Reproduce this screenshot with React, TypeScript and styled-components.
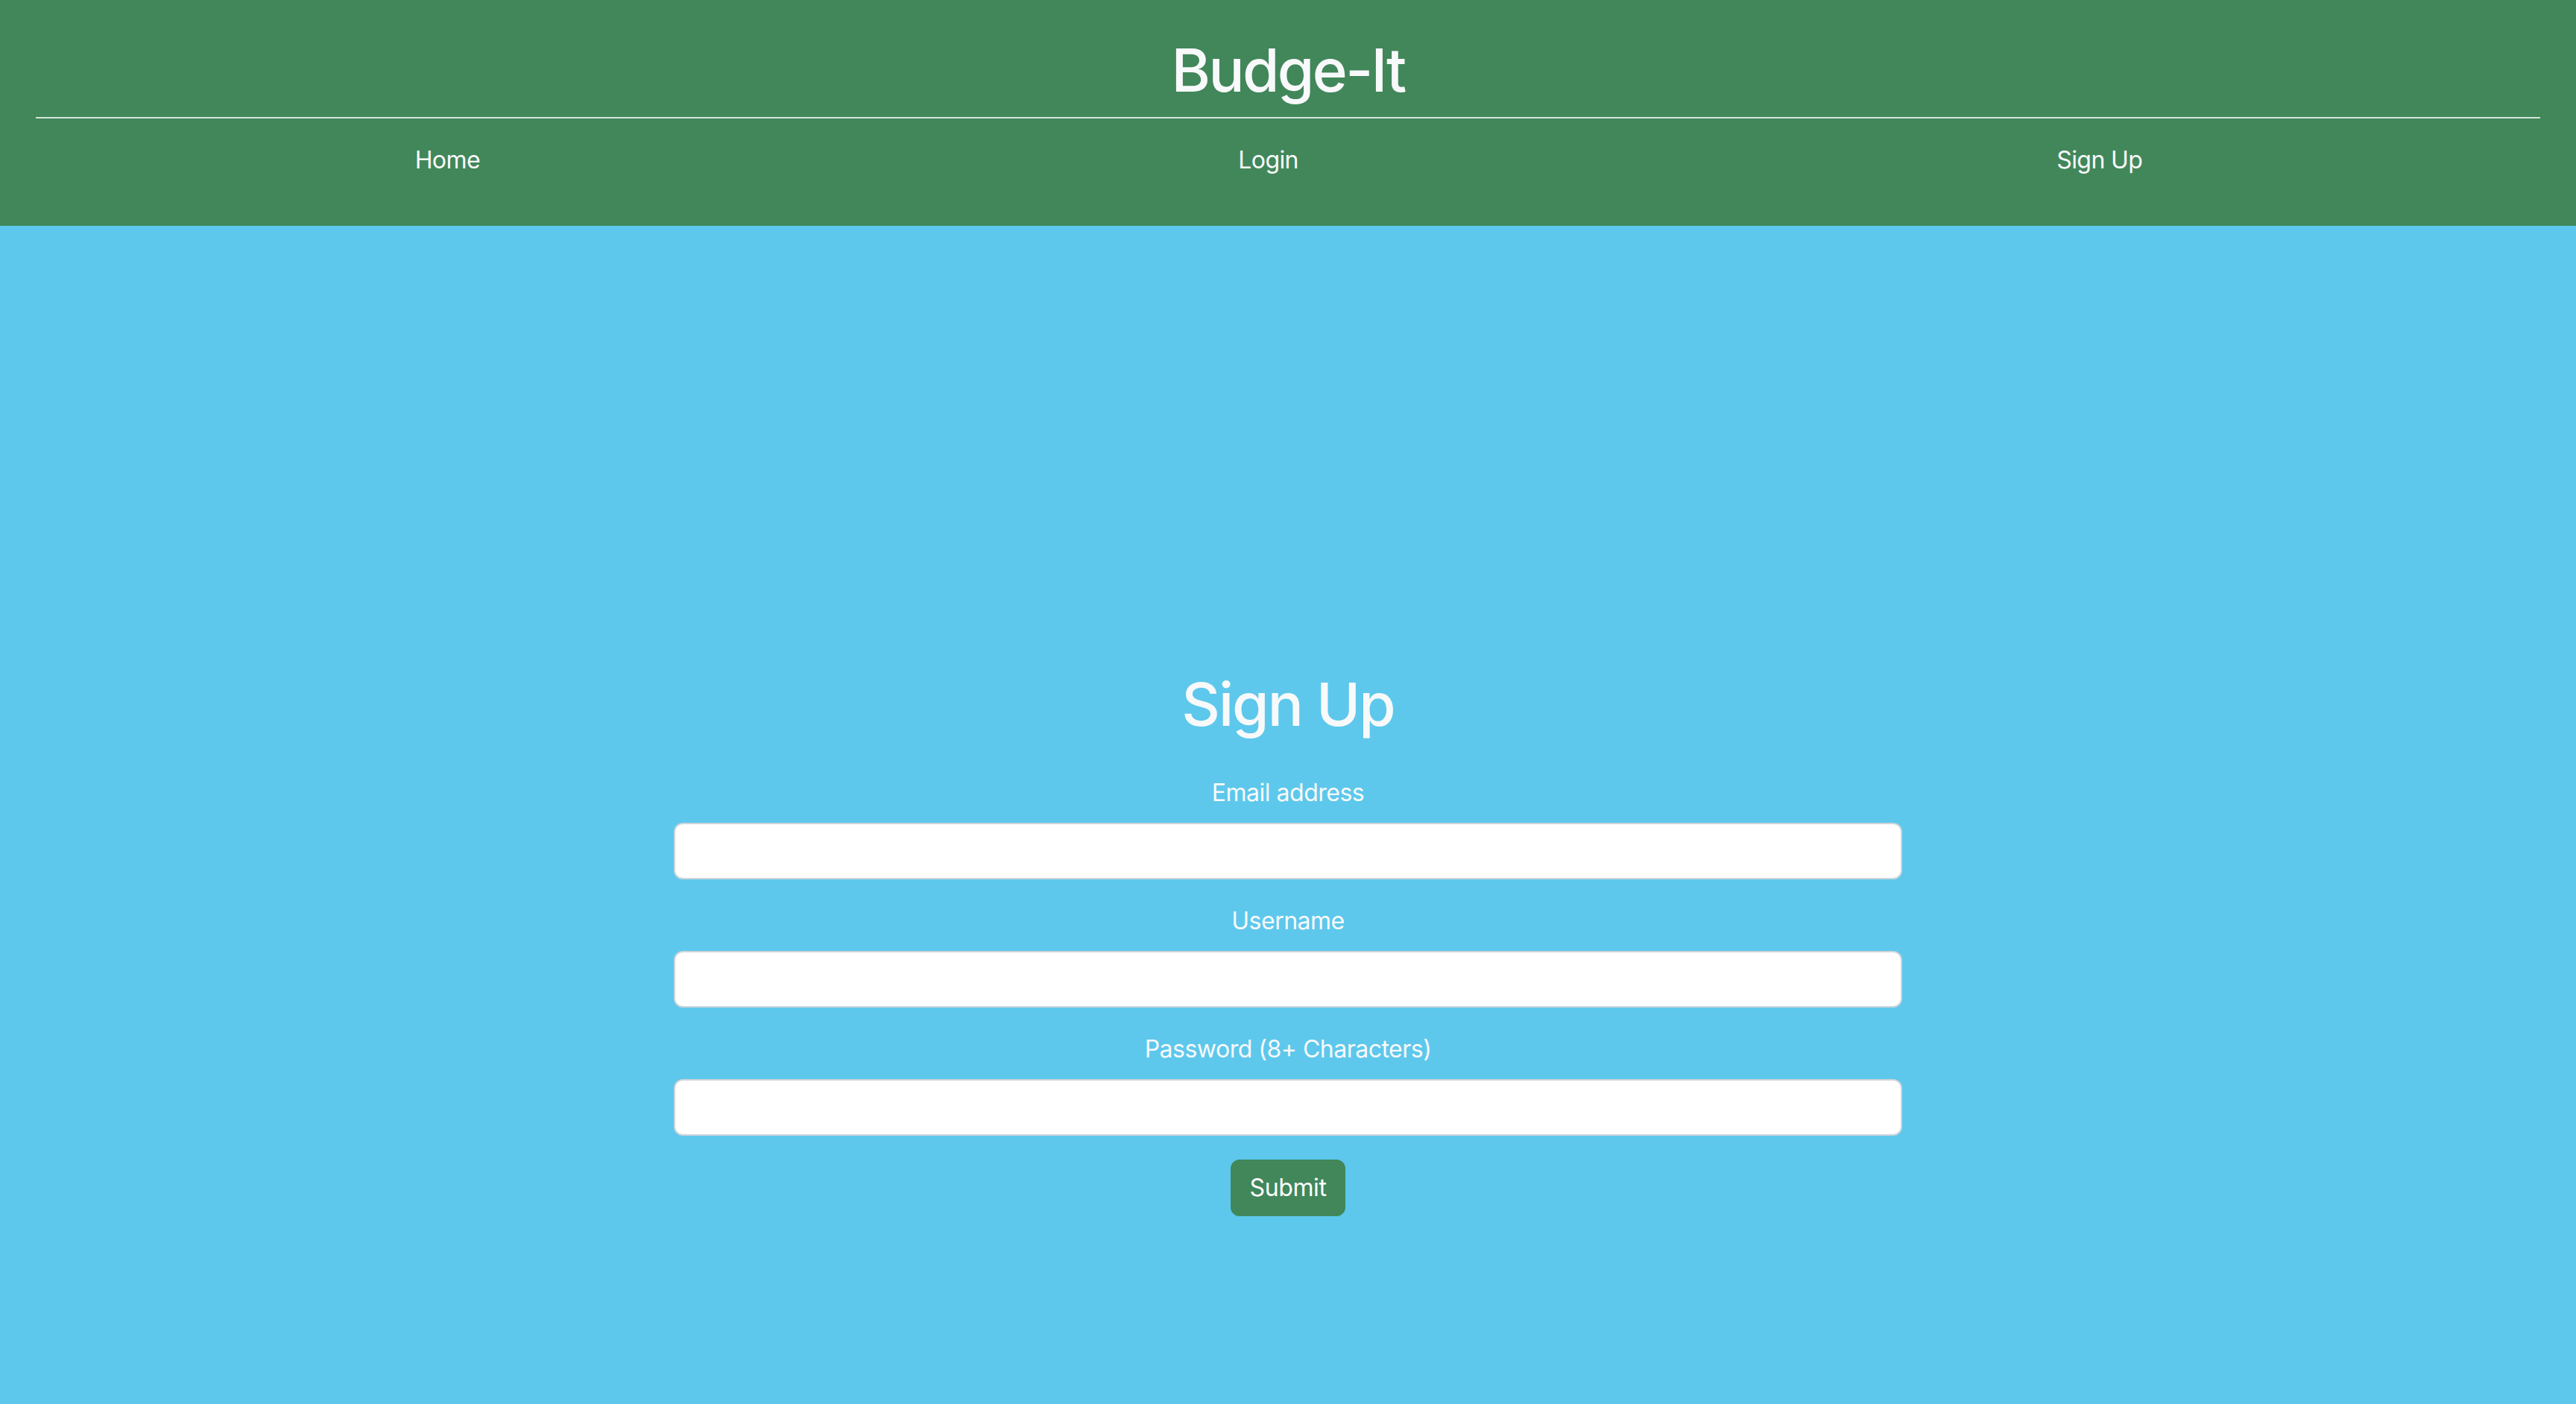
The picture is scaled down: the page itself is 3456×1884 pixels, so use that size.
import React from "react";
import styled, { createGlobalStyle } from "styled-components";

const GREEN = "#41875a";
const BLUE = "#5dc8ec";

const GlobalStyle = createGlobalStyle`
  html, body {
    margin: 0;
    padding: 0;
    background: ${BLUE};
    font-family: Inter, "Noto Sans", "Liberation Sans", sans-serif;
    color: #f8f9fa;
  }
  * { box-sizing: border-box; }
`;

const Page = styled.div`
  min-height: 1884px;
  display: flex;
  flex-direction: column;
  background: ${BLUE};
`;

const Header = styled.header`
  background: ${GREEN};
  padding: 46px 48px 48px;
  display: flex;
  flex-direction: column;
`;

const Brand = styled.h1`
  margin: 0;
  font-size: 80px;
  line-height: 96px;
  font-weight: 500;
  letter-spacing: -2.6px;
  text-align: center;
  color: #f8f9fa;
`;

const Rule = styled.hr`
  margin: 15px 0 16px;
  border: 0;
  height: 2px;
  background: rgba(255, 255, 255, 0.78);
`;

const Nav = styled.nav`
  display: flex;
  justify-content: space-around;
  padding-right: 25px;
`;

const NavLink = styled.a`
  padding: 16px 0;
  font-size: 32px;
  line-height: 48px;
  color: #f8f9fa;
  text-decoration: none;
  letter-spacing: -0.6px;
  cursor: pointer;
`;

const Main = styled.main`
  flex: 1;
  padding-top: 594px;
  display: flex;
  flex-direction: column;
  align-items: center;
`;

const Title = styled.h1`
  margin: 0 0 47px;
  font-size: 80px;
  line-height: 96px;
  font-weight: 500;
  letter-spacing: -2px;
  color: #f8f9fa;
`;

const Form = styled.form`
  width: 1648px;
  display: flex;
  flex-direction: column;
  align-items: center;
`;

const Field = styled.div`
  width: 100%;
  display: flex;
  flex-direction: column;
  align-items: center;
  margin-bottom: 32px;
`;

const Label = styled.label`
  font-size: 32px;
  line-height: 48px;
  margin-bottom: 16px;
  color: #f8f9fa;
  letter-spacing: -0.5px;
`;

const Input = styled.input`
  width: 100%;
  height: 76px;
  padding: 12px 24px;
  font-size: 32px;
  font-family: inherit;
  border: 2px solid #ced4da;
  border-radius: 12px;
  background: #fff;
  outline: none;
`;

const SubmitButton = styled.button`
  height: 76px;
  width: 154px;
  padding: 0;
  font-family: inherit;
  font-size: 32px;
  line-height: 48px;
  color: #fff;
  background: ${GREEN};
  border: 2px solid ${GREEN};
  border-radius: 12px;
  letter-spacing: -0.4px;
  cursor: pointer;
`;

export default function App() {
  return (
    <>
      <GlobalStyle />
      <Page>
        <Header>
          <Brand>Budge-It</Brand>
          <Rule />
          <Nav>
            <NavLink>Home</NavLink>
            <NavLink>Login</NavLink>
            <NavLink>Sign Up</NavLink>
          </Nav>
        </Header>
        <Main>
          <Title>Sign Up</Title>
          <Form onSubmit={(e) => e.preventDefault()}>
            <Field>
              <Label htmlFor="email">Email address</Label>
              <Input id="email" type="email" />
            </Field>
            <Field>
              <Label htmlFor="username">Username</Label>
              <Input id="username" type="text" />
            </Field>
            <Field>
              <Label htmlFor="password">Password (8+ Characters)</Label>
              <Input id="password" type="password" />
            </Field>
            <SubmitButton type="submit">Submit</SubmitButton>
          </Form>
        </Main>
      </Page>
    </>
  );
}
